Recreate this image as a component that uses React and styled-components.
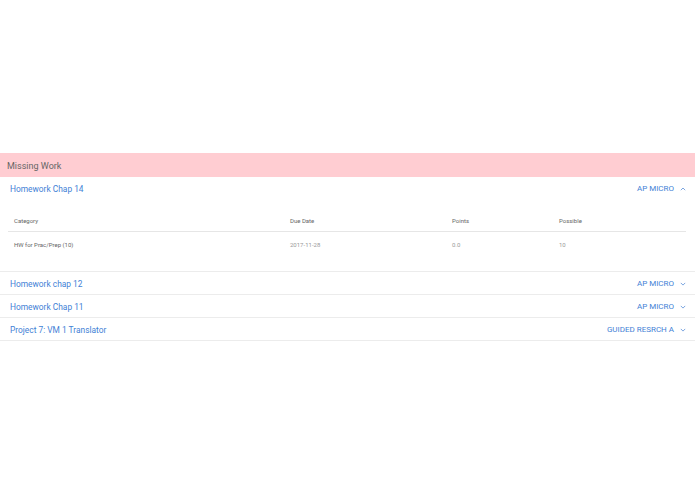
import React from "react";
import styled, { createGlobalStyle } from "styled-components";

const Global = createGlobalStyle`
    html, body {
        margin: 0;
        padding: 0;
        background: #ffffff;
        font-family: Roboto, "Liberation Sans", sans-serif;
    }
`

const Page = styled.div`
    padding-top: 153px;
    width: 695px;
`

const SectionHeader = styled.div`
    background: #ffcdd2;
    height: 24px;
    display: flex;
    align-items: center;
    padding: 1px 0 0 7px;
    box-sizing: border-box;
    color: #666;
    font-size: 9px;
`

const Item = styled.div`
    border-bottom: 1px solid #ececec;
`

const ItemHead = styled.div`
    display: flex;
    align-items: center;
    justify-content: space-between;
    height: 22px;
    padding: 1px 9px 0 10px;
    box-sizing: border-box;
    color: #3f7fd6;
    font-size: 8.4px;
`

const Right = styled.div`
    display: flex;
    align-items: center;
    gap: 6px;
    font-size: 8px;
`

const Chevron = ({ up }) => (
    <svg width="6" height="4" viewBox="0 0 6 4">
        <path
            d={up ? "M0.8 3.2 L3 1 L5.2 3.2" : "M0.8 0.9 L3 3.1 L5.2 0.9"}
            fill="none"
            stroke="#5b8fd8"
            strokeWidth="0.8"
        />
    </svg>
)

const Panel = styled.div`
    padding: 9px 9px 15px 8px;
`

const Table = styled.table`
    width: 100%;
    table-layout: fixed;
    border-collapse: collapse;
    font-size: 6px;
`

const Th = styled.th`
    text-align: left;
    font-weight: 400;
    color: #666;
    height: 22px;
    padding: 1px 0 0 6px;
    border-bottom: 1px solid #e6e6e6;
    width: ${p => p.w || "auto"};
`

const Td = styled.td`
    color: ${p => p.dim ? "#999" : "#666"};
    height: 23px;
    padding: 1px 0 0 6px;
`

const items = [
    { title: "Homework chap 12", course: "AP MICRO" },
    { title: "Homework Chap 11", course: "AP MICRO" },
    { title: "Project 7: VM 1 Translator", course: "GUIDED RESRCH A" },
]

const App = () => {
    return (
        <Page>
            <Global />
            <SectionHeader>Missing Work</SectionHeader>

            <Item>
                <ItemHead>
                    <span>Homework Chap 14</span>
                    <Right>AP MICRO <Chevron up /></Right>
                </ItemHead>
                <Panel>
                    <Table>
                        <thead>
                            <tr>
                                <Th w="270px">Category</Th>
                                <Th w="156px">Due Date</Th>
                                <Th w="101px">Points</Th>
                                <Th>Possible</Th>
                            </tr>
                        </thead>
                        <tbody>
                            <tr>
                                <Td>HW for Prac/Prep (10)</Td>
                                <Td dim>2017-11-28</Td>
                                <Td dim>0.0</Td>
                                <Td dim>10</Td>
                            </tr>
                        </tbody>
                    </Table>
                </Panel>
            </Item>

            {items.map(it => (
                <Item key={it.title}>
                    <ItemHead>
                        <span>{it.title}</span>
                        <Right>{it.course} <Chevron /></Right>
                    </ItemHead>
                </Item>
            ))}
        </Page>
    );
}

export default App;
